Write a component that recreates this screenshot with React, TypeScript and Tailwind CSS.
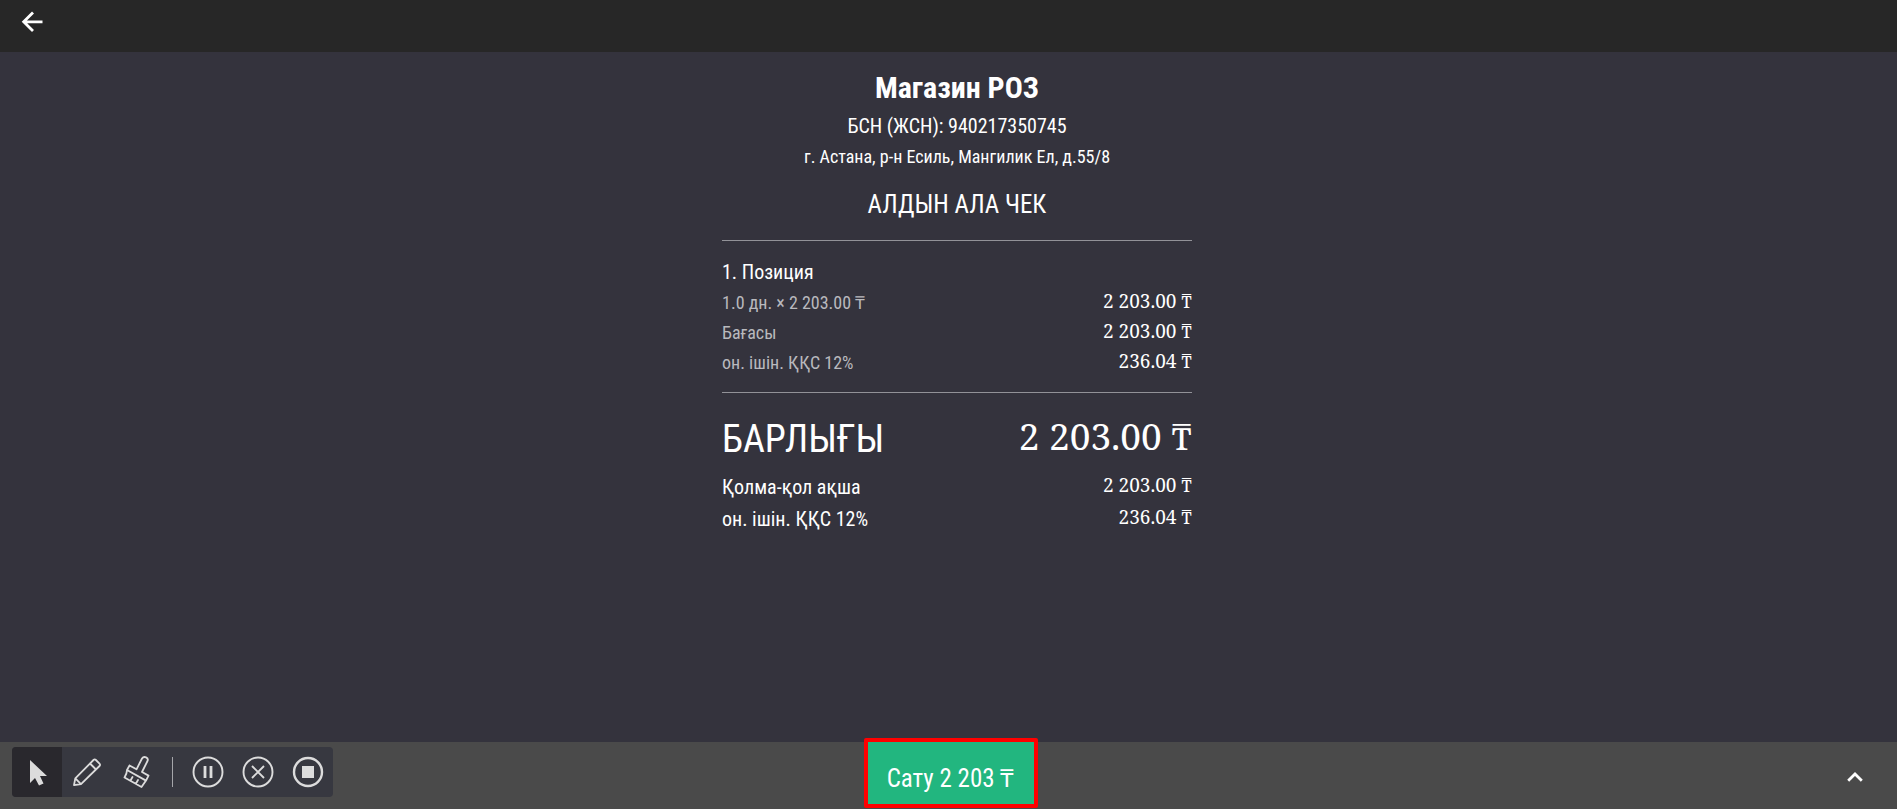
import React from "react";

interface RowProps {
  label: string;
  value: string;
  labelClass: string;
  valueClass: string;
}

const positionRows = [
  { label: "1.0 дн. × 2 203.00 ₸", value: "2 203.00 ₸" },
  { label: "Бағасы", value: "2 203.00 ₸" },
  { label: "он. ішін. ҚҚС 12%", value: "236.04 ₸" },
];

const paymentRows = [
  { label: "Қолма-қол ақша", value: "2 203.00 ₸" },
  { label: "он. ішін. ҚҚС 12%", value: "236.04 ₸" },
];

const amountFont =
  "font-['Roboto_Slab','Noto_Serif','DejaVu_Serif_Condensed','DejaVu_Serif',serif]";

const Row = ({ label, value, labelClass, valueClass }: RowProps) => {
  return (
    <div className="flex items-start justify-between">
      <dt className={labelClass}>{label}</dt>
      <dd className={`${amountFont} ${valueClass}`}>{value}</dd>
    </div>
  );
};

const toolClass = "flex h-[50px] w-[50px] items-center justify-center";

const RecorderToolbar = () => {
  return (
    <div className="flex w-[321px] items-center overflow-hidden rounded bg-[#373840] text-[#dcdcdc]">
      <button aria-label="Курсор" className={`${toolClass} bg-[#29282d]`}>
        <svg width="50" height="50" viewBox="0 0 50 50" fill="currentColor">
          <path d="M18 13v23l5-5 4 7.500 4.500-2-3.500-7.500H35z" />
        </svg>
      </button>
      <button aria-label="Қарындаш" className={toolClass}>
        <svg
          width="50"
          height="50"
          viewBox="0 0 50 50"
          fill="none"
          stroke="currentColor"
          strokeWidth="1.800"
          strokeLinejoin="round"
        >
          <path d="M12 38.200l1.300-6.800L31.500 13q1.200-1.200 2.400 0l3.600 3.600q1.200 1.200 0 2.400L19 37.200zM13.300 31.400l5.700 5.800M28 16.500l6 6" />
        </svg>
      </button>
      <button aria-label="Қылқалам" className={toolClass}>
        <svg
          width="50"
          height="50"
          viewBox="0 0 50 50"
          fill="none"
          stroke="currentColor"
          strokeWidth="1.800"
          strokeLinejoin="round"
          strokeLinecap="round"
        >
          <path d="M17.500 18.500l7 3.800 5.500-10.800c2-3 7-1 5.500 2.500L30 25l6.500 3.600-2.500 5M17.500 18.500l-2.500 4.500 19 10.600-4.500 6.400-17-9.500q2.500-4 2.500-7.500M18.500 33.500l2-3.500M24 36.500l2-3.500" />
        </svg>
      </button>
      <span className="mx-[10px] h-[30px] w-px bg-[#a5a6aa]" />
      <button aria-label="Кідірту" className={toolClass}>
        <svg
          width="32"
          height="32"
          viewBox="0 0 32 32"
          fill="none"
          stroke="currentColor"
        >
          <circle cx="16" cy="16" r="14.500" strokeWidth="1.900" />
          <path d="M13 10v12M19 10v12" strokeWidth="2.800" />
        </svg>
      </button>
      <button aria-label="Болдырмау" className={toolClass}>
        <svg
          width="32"
          height="32"
          viewBox="0 0 32 32"
          fill="none"
          stroke="currentColor"
        >
          <circle cx="16" cy="16" r="14.500" strokeWidth="1.900" />
          <path d="M10 10l12 12M22 10L10 22" strokeWidth="1.900" />
        </svg>
      </button>
      <button aria-label="Тоқтату" className={toolClass}>
        <svg
          width="32"
          height="32"
          viewBox="0 0 32 32"
          fill="none"
          stroke="currentColor"
        >
          <circle cx="16" cy="16" r="14" strokeWidth="2.400" />
          <path d="M10 10h12v12H10z" fill="currentColor" stroke="none" />
        </svg>
      </button>
    </div>
  );
};

const App = () => {
  return (
    <div className="flex min-h-screen flex-col bg-[#34333d] font-['Roboto_Condensed','Liberation_Sans_Narrow','Roboto',sans-serif] text-white">
      <header className="flex h-[52px] items-start bg-[#272727] px-5 pt-[10px]">
        <button aria-label="Артқа">
          <svg
            width="24"
            height="24"
            viewBox="0 0 24 24"
            fill="none"
            stroke="currentColor"
            strokeWidth="2.800"
          >
            <path d="M22.500 11.800H4M13 2.500L3.700 11.800l9.300 9.200" />
          </svg>
        </button>
      </header>

      <main className="flex grow flex-col items-center pt-4 pl-[17px]">
        <div className="w-full max-w-[470px]">
          <div className="flex flex-col items-center text-center">
            <h1 className="text-[30px] leading-[40px] font-bold">
              Магазин РОЗ
            </h1>
            <p className="pt-1 text-[20px] leading-[28px]">
              БСН (ЖСН): 940217350745
            </p>
            <p className="pt-1 text-[18px] leading-[26px]">
              г. Астана, р-н Есиль, Мангилик Ел, д.55/8
            </p>
            <h2 className="pt-5 text-[25px] leading-[30px]">АЛДЫН АЛА ЧЕК</h2>
          </div>

          <section className="mt-5 border-y border-[#929298] pt-4 pb-[14px]">
            <h3 className="text-[20px] leading-[31px]">1. Позиция</h3>
            <dl>
              {positionRows.map((row) => (
                <Row
                  key={row.label}
                  label={row.label}
                  value={row.value}
                  labelClass="text-[18px] leading-[30px] text-[#b9b9bd]"
                  valueClass="text-[19px] leading-[26px]"
                />
              ))}
            </dl>
          </section>

          <dl className="pt-5">
            <Row
              label="БАРЛЫҒЫ"
              value="2 203.00 ₸"
              labelClass="text-[38px] leading-[52px]"
              valueClass="text-[37px] leading-[46px]"
            />
            <div className="pt-[6px]">
              {paymentRows.map((row) => (
                <Row
                  key={row.label}
                  label={row.label}
                  value={row.value}
                  labelClass="text-[20px] leading-[32px]"
                  valueClass="text-[19px] leading-[28px]"
                />
              ))}
            </div>
          </dl>
        </div>
      </main>

      <footer className="grid h-[67px] grid-cols-[1fr_auto_1fr] items-start bg-[#4a4a4a]">
        <div className="pt-[5px] pl-3">
          <RecorderToolbar />
        </div>
        <button className="-mt-1 ml-1 h-[70px] w-[174px] rounded-xs border-4 border-[#ff0000] bg-[#22b67f] pt-3 text-[25px] leading-[30px] whitespace-nowrap">
          Сату 2 203 ₸
        </button>
        <div className="flex justify-end pt-6 pr-[30px]">
          <button aria-label="Жоғары">
            <svg
              width="24"
              height="24"
              viewBox="0 0 24 24"
              fill="none"
              stroke="currentColor"
              strokeWidth="2.800"
            >
              <path d="M5.200 14.700L12 8l6.800 6.700" />
            </svg>
          </button>
        </div>
      </footer>
    </div>
  );
};

export default App;
